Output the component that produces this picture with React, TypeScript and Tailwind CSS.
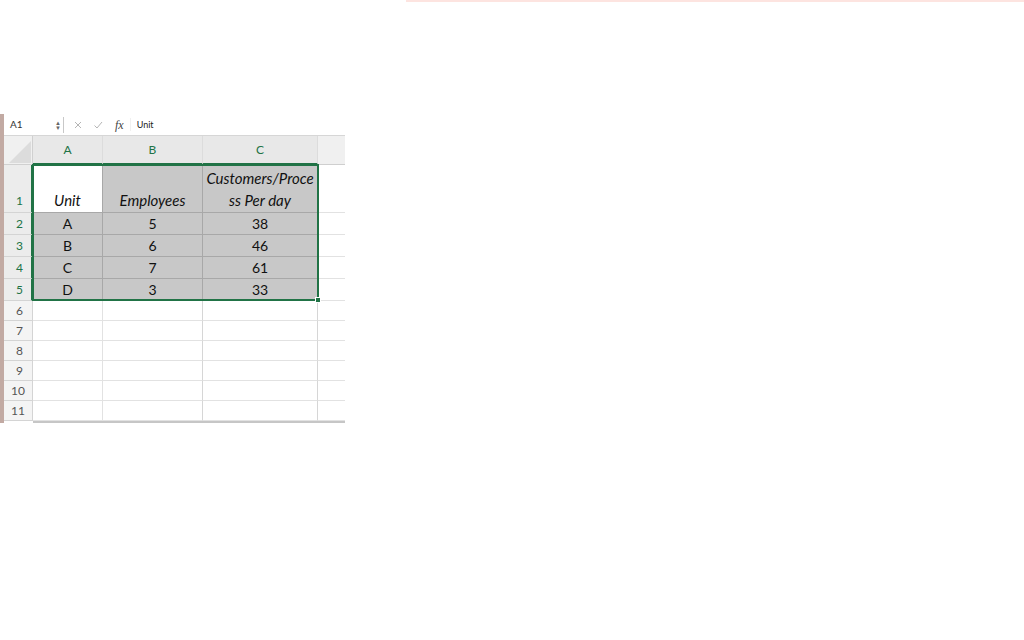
import React from "react";

const font = { fontFamily: "Lato, 'Open Sans', sans-serif" };

type Row = { n: number; h: string; cells: string[]; filled: boolean[]; sel: boolean };

const rows: Row[] = [
	{ n: 2, h: "h-[22px]", cells: ["A", "5", "38"], filled: [true, true, true], sel: true },
	{ n: 3, h: "h-[22px]", cells: ["B", "6", "46"], filled: [true, true, true], sel: true },
	{ n: 4, h: "h-[22px]", cells: ["C", "7", "61"], filled: [true, true, true], sel: true },
	{ n: 5, h: "h-[22px]", cells: ["D", "3", "33"], filled: [true, true, true], sel: true },
	...[6, 7, 8, 9, 10, 11].map((n) => ({
		n,
		h: "h-[20px]",
		cells: ["", "", ""],
		filled: [false, false, false],
		sel: false,
	})),
];

const colW = ["w-[70px]", "w-[100px]", "w-[115px]"];

export default function App() {
	return (
		<div className="w-[1024px] h-[640px] bg-white overflow-hidden" style={font}>
			{/* faint line at top */}
			<div className="ml-[406px] h-[2px] bg-[#fde4e0]" />

			<div className="mt-[112px] flex">
				<div className="w-[4px] h-[309px] bg-[#c2aaa3]" />

				<div className="w-[341px]">
					{/* Formula bar */}
					<div className="h-[22px] flex items-center bg-white border-b border-[#d6d6d6] text-[10px] text-[#333]">
						<div className="w-[51px] pl-[6px]">A1</div>
						<div className="flex flex-col items-center text-[#666] leading-[5px] w-[6px]">
							<span className="text-[6px]">▲</span>
							<span className="text-[6px]">▼</span>
						</div>
						<div className="w-px h-[16px] bg-[#c8c8c8] ml-[2px]" />
						<svg width="10" height="10" viewBox="0 0 10 10" className="ml-[9px]">
							<path d="M2 2 L8 8 M8 2 L2 8" stroke="#b5b5b5" strokeWidth="1" />
						</svg>
						<svg width="10" height="10" viewBox="0 0 10 10" className="ml-[10px]">
							<path d="M1.5 5.5 L4 8 L9 2" stroke="#b5b5b5" strokeWidth="1" fill="none" />
						</svg>
						<span
							className="ml-[12px] text-[12px] italic text-[#444]"
							style={{ fontFamily: "'Liberation Serif', serif" }}
						>
							fx
						</span>
						<div className="w-px h-[13px] bg-[#f0f0f0] ml-[6px]" />
						<span className="ml-[6px] text-[9px] text-[#222]">Unit</span>
					</div>

					{/* Grid */}
					<div className="relative">
						{/* Column headers */}
						<div className="flex h-[29px] bg-[#f0f0f0]">
							<div className="w-[29px] border-r border-b border-[#d0d0d0] relative overflow-hidden">
								<svg width="29" height="29" viewBox="0 0 29 29" className="absolute left-0 top-0">
									<path d="M27 5 L27 27 L5 27 Z" fill="#dcdcdc" />
								</svg>
							</div>
							{["A", "B", "C"].map((c, i) => (
								<div
									key={c}
									className={`${colW[i]} border-r border-[#dcdcdc] border-b-2 border-b-[#217346] bg-[#e8e8e8] flex items-center justify-center text-[12px] text-[#217346]`}
								>
									{c}
								</div>
							))}
							<div className="flex-1 border-b border-[#cfcfcf]" />
						</div>

						{/* Row 1 */}
						<div className="flex h-[48px] text-[15px] text-[#111]">
							<div className="w-[29px] bg-[#ececec] border-r-2 border-[#217346] border-b border-b-[#d4d4d4] flex items-end pb-[2px] pl-[12px] text-[12px] text-[#217346]">
								1
							</div>
							<div className={`${colW[0]} border-r border-b border-[#a8a8a8] bg-white flex items-end justify-center pb-[1px] italic`}>
								Unit
							</div>
							<div className={`${colW[1]} border-r border-b border-[#a8a8a8] bg-[#c8c8c8] flex items-end justify-center pb-[1px] italic`}>
								Employees
							</div>
							<div className={`${colW[2]} border-r border-b border-[#a8a8a8] bg-[#c8c8c8] flex flex-col items-center justify-end pb-[1px] italic leading-[22px]`}>
								<span>Customers/Proce</span>
								<span>ss Per day</span>
							</div>
							<div className="flex-1 border-b border-[#e2e2e2]" />
						</div>

						{rows.map((r) => (
							<div key={r.n} className={`flex ${r.h} text-[14px] text-[#111]`}>
								<div
									className={`w-[29px] border-r border-b flex items-center text-[12px] ${
										r.sel
											? "bg-[#ececec] border-r-[#217346] border-r-2 border-b-[#d4d4d4] text-[#217346]"
											: "bg-[#f4f4f4] border-[#d4d4d4] text-[#555]"
									} ${r.n >= 10 ? "pl-[7px]" : "pl-[12px]"}`}
								>
									{r.n}
								</div>
								{r.cells.map((v, i) => (
									<div
										key={i}
										className={`${colW[i]} border-r border-b flex items-center justify-center ${
											r.filled[i] ? "bg-[#c8c8c8] border-[#a8a8a8]" : "bg-white border-[#e2e2e2]"
										} ${!r.filled[i] && i > 0 ? "border-r-[#d6d6d6]" : ""}`}
									>
										{v}
									</div>
								))}
								<div className="flex-1 border-b border-[#e2e2e2]" />
							</div>
						))}
						<div className="h-[2px] ml-[29px] bg-[#c6c6c6]" />

						{/* Selection outline */}
						<div className="absolute left-[28px] top-[28px] w-[287px] h-[137px] border-2 border-[#217346] pointer-events-none" />
						<div className="absolute left-[311px] top-[161px] w-[6px] h-[6px] bg-[#217346] border border-white" />
					</div>
				</div>
			</div>
		</div>
	);
}
